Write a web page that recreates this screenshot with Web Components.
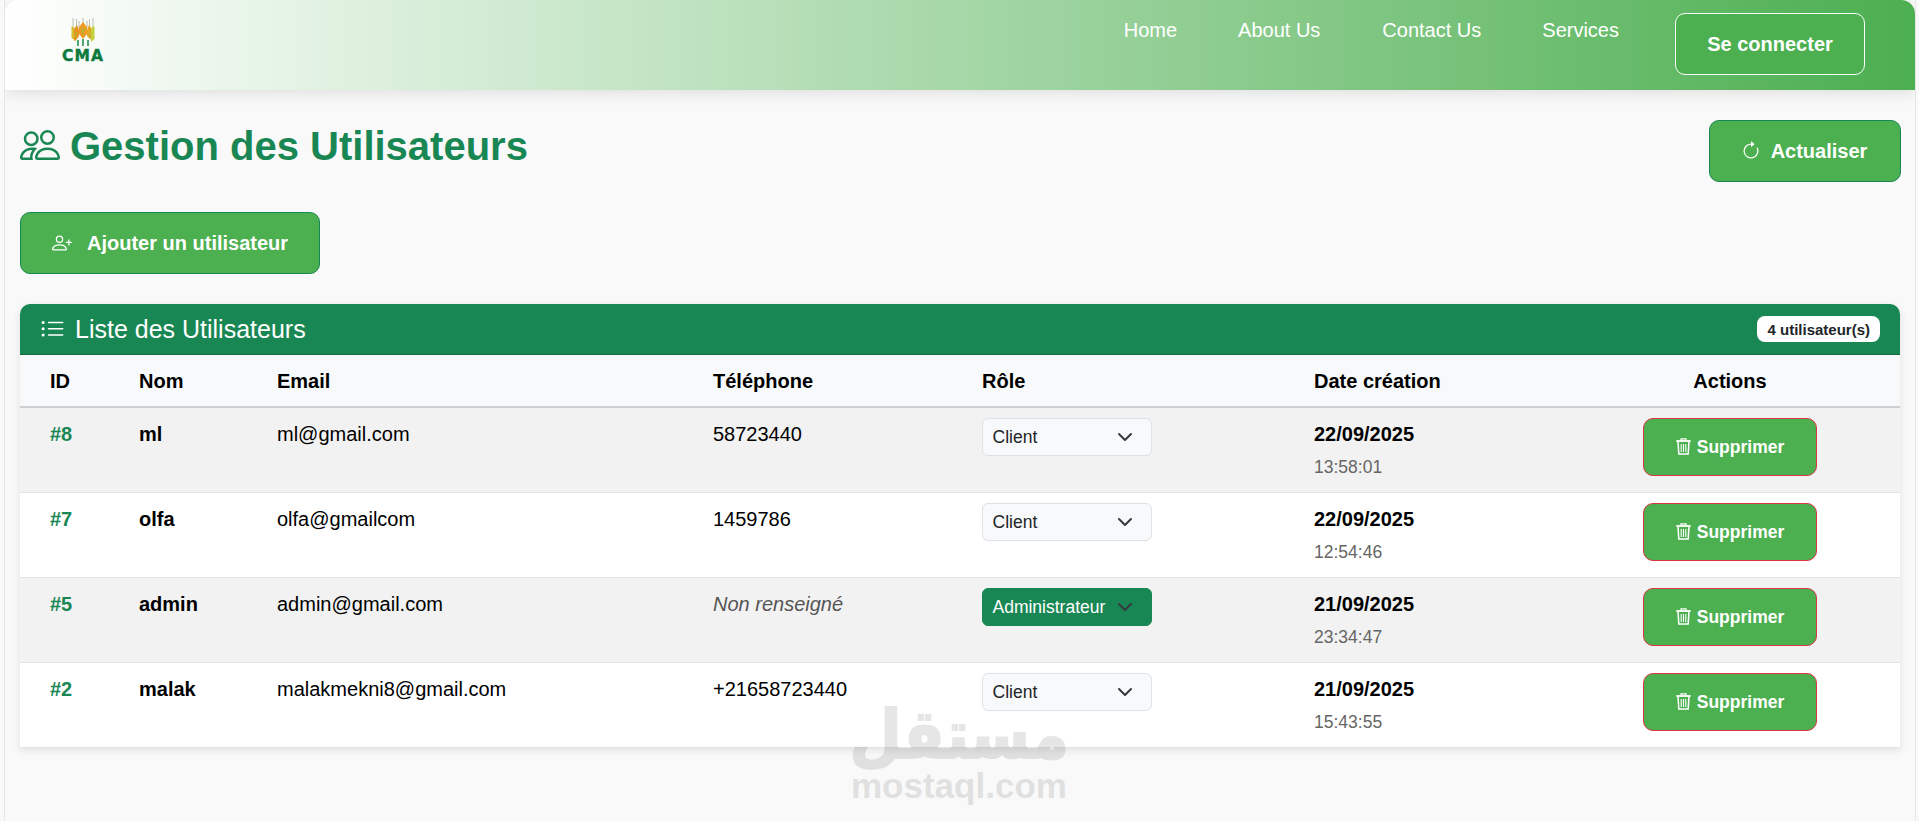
<!DOCTYPE html>
<html lang="fr">
<head>
<meta charset="utf-8">
<title>Gestion des Utilisateurs</title>
<style>
    html, body { margin: 0; height: 821px; overflow: hidden; background: #f9f9f9; }
    body { font-family: "Liberation Sans", Arial, sans-serif; font-size: 20px; color: #000; }
</style>
</head>
<body>
<app-page>
    <top-nav slot="nav"></top-nav>
    <page-head></page-head>
    <app-button icon="person-plus" class="add">Ajouter un utilisateur</app-button>
    <users-card count="4">
        <user-row uid="8" name="ml" email="ml@gmail.com" phone="58723440" role="Client" date="22/09/2025" time="13:58:01"></user-row>
        <user-row uid="7" name="olfa" email="olfa@gmailcom" phone="1459786" role="Client" date="22/09/2025" time="12:54:46"></user-row>
        <user-row uid="5" name="admin" email="admin@gmail.com" role="Administrateur" date="21/09/2025" time="23:34:47"></user-row>
        <user-row uid="2" name="malak" email="malakmekni8@gmail.com" phone="+21658723440" role="Client" date="21/09/2025" time="15:43:55"></user-row>
    </users-card>
</app-page>
<script>
const ICONS = {
    people: '<path d="M15 14s1 0 1-1-1-4-5-4-5 3-5 4 1 1 1 1zm-7.978-1L7 12.996c.001-.264.167-1.03.76-1.72C8.312 10.629 9.282 10 11 10c1.717 0 2.687.63 3.24 1.276.593.69.758 1.457.76 1.72l-.008.002-.014.002H7.022ZM11 7a2 2 0 1 0 0-4 2 2 0 0 0 0 4m3-2a3 3 0 1 1-6 0 3 3 0 0 1 6 0M6.936 9.28a6 6 0 0 0-1.23-.247A7 7 0 0 0 5 9c-4 0-5 3-5 4q0 1 1 1h4.216A2.24 2.24 0 0 1 5 13c0-1.01.377-2.042 1.09-2.904.243-.294.526-.569.846-.816M4.92 10A5.5 5.5 0 0 0 4 13H1c0-.26.164-1.03.76-1.724.545-.636 1.492-1.256 3.16-1.275ZM1.5 5.5a3 3 0 1 1 6 0 3 3 0 0 1-6 0m3-2a2 2 0 1 0 0 4 2 2 0 0 0 0-4"/>',
    "person-plus": '<path d="M6 8a3 3 0 1 0 0-6 3 3 0 0 0 0 6m2-3a2 2 0 1 1-4 0 2 2 0 0 1 4 0m4 8c0 1-1 1-1 1H1s-1 0-1-1 1-4 6-4 6 3 6 4m-1-.004c-.001-.246-.154-.986-.832-1.664C9.516 10.68 8.289 10 6 10s-3.516.68-4.168 1.332c-.678.678-.83 1.418-.832 1.664z"/><path d="M13.5 5a.5.5 0 0 1 .5.5V7h1.5a.5.5 0 0 1 0 1H14v1.5a.5.5 0 0 1-1 0V8h-1.5a.5.5 0 0 1 0-1H13V5.5a.5.5 0 0 1 .5-.5"/>',
    refresh: '<path d="M8 3a5 5 0 1 0 4.546 2.914.5.5 0 0 1 .908-.417A6 6 0 1 1 8 2z"/><path d="M8 4.466V.534a.25.25 0 0 1 .41-.192l2.36 1.966c.12.1.12.284 0 .384L8.41 4.658A.25.25 0 0 1 8 4.466"/>',
    list: '<path d="M5 11.5a.5.5 0 0 1 .5-.5h9a.5.5 0 0 1 0 1h-9a.5.5 0 0 1-.5-.5m0-4a.5.5 0 0 1 .5-.5h9a.5.5 0 0 1 0 1h-9a.5.5 0 0 1-.5-.5m0-4a.5.5 0 0 1 .5-.5h9a.5.5 0 0 1 0 1h-9a.5.5 0 0 1-.5-.5m-3 1a1 1 0 1 0 0-2 1 1 0 0 0 0 2m0 4a1 1 0 1 0 0-2 1 1 0 0 0 0 2m0 4a1 1 0 1 0 0-2 1 1 0 0 0 0 2"/>'
};

function icon(name, size) {
    return `<svg width="${size}" height="${size}" viewBox="0 0 16 16" fill="currentColor" aria-hidden="true">${ICONS[name]}</svg>`;
}

const TRASH = `<svg width="15" height="17" viewBox="0 0 15 17" fill="none" stroke="currentColor" aria-hidden="true">
    <path d="M.3 3h14.4" stroke-width="1.8"/><path d="M5 2.4V.8h5v1.6" stroke-width="1.2"/>
    <path d="M2 3.4l.8 12.6h9.4l.8-12.6" stroke-width="1.5"/><path d="M5.2 6v8M7.5 6v8M9.8 6v8" stroke-width="1.1"/>
</svg>`;

class AppPage extends HTMLElement {
    constructor() {
        super();
        this.attachShadow({ mode: "open" }).innerHTML = `
        <style>
            :host {
                display: block;
                position: relative;
                box-sizing: border-box;
                height: 821px;
                margin: 0 3px 0 4px;
                border-left: 1px solid #e6e6e6;
                border-right: 1px solid #e6e6e6;
                overflow: hidden;
            }
            main { padding: 30px 15px 0; display: flex; flex-direction: column; gap: 30px; align-items: flex-start; }
            .wm {
                position: absolute;
                left: 846px;
                top: 692px;
                width: 213px;
                text-align: center;
                color: #000;
                opacity: 0.095;
                font-weight: 700;
                pointer-events: none;
            }
            .ar {
                font-family: "DejaVu Sans", sans-serif;
                font-size: 60px;
                line-height: 77px;
                height: 77px;
                -webkit-text-stroke: 2px #000;
                transform: translate(5px, 5px) scaleY(1.12);
            }
            .lat { font-size: 35px; line-height: 34px; }
        </style>
        <slot name="nav"></slot>
        <main><slot></slot></main>
        <div class="wm"><div class="ar" dir="rtl">مستقل</div><div class="lat">mostaql.com</div></div>`;
    }
}

class TopNav extends HTMLElement {
    constructor() {
        super();
        this.attachShadow({ mode: "open" }).innerHTML = `
        <style>
            :host {
                display: flex;
                justify-content: space-between;
                height: 90px;
                background: linear-gradient(90deg, #fff 0%, #4caf50 100%);
                border-radius: 14px 14px 0 0;
                box-shadow: 0 4px 14px rgba(0, 0, 0, 0.1);
                position: relative;
                padding-right: 50px;
            }
            .logo { margin-left: 53px; padding-top: 18px; width: 50px; display: flex; flex-direction: column; align-items: center; }
            .logo svg { display: block; }
            .logo b {
                font-family: "DejaVu Sans", sans-serif;
                font-size: 15.5px;
                font-weight: 700;
                letter-spacing: 1px;
                line-height: 14px;
                color: #0c7a3e;
                -webkit-text-stroke: 0.4px #0c7a3e;
                margin-top: 3px;
            }
            ul { list-style: none; margin: 0; padding: 0; display: flex; align-items: flex-start; }
            li { color: #fff; font-size: 20px; line-height: 30px; padding-top: 15px; margin-right: 61px; }
            li:nth-child(2) { margin-right: 62px; }
            li:nth-child(4) { margin-right: 56px; }
            a {
                box-sizing: border-box;
                display: flex;
                align-items: center;
                justify-content: center;
                width: 190px;
                height: 62px;
                margin-top: 13px;
                background: #4caf50;
                border: 1px solid #fff;
                border-radius: 10px;
                color: #fff;
                font-weight: 700;
                font-size: 20px;
            }
        </style>
        <div class="logo">
            <svg width="24" height="28" viewBox="0 0 24 28">
                <path d="M2 0v9M5.5 1v8M8 3v7M12 0v9M16 3v7M18.5 1v8M22 0v9" stroke="#a8b0a0" stroke-width="0.8" fill="none"/>
                <path d="M.5 8l3 2 1.5 4v9l-4.500-3z" fill="#d8bd2e"/>
                <path d="M3 11l3-4 2 5v6l-2 3-3 2z" fill="#e8931f"/>
                <path d="M8 9l4-5 4 5v7l-4 5-4-5z" fill="#ef9a24"/>
                <path d="M16 12l2-5 3 4v11l-2-1-3-3z" fill="#e8a722"/>
                <path d="M20 10l3.500-2v13l-3.500 3z" fill="#c6cf3c"/>
                <path d="M12 9v9M9.500 11l2.500 3 2.500-3M5 14v6M19 14v6" stroke="#a9b832" stroke-width="1" fill="none"/>
                <path d="M7 22v6M12 21v7M17 22v6" stroke="#1f8a45" stroke-width="1.5"/>
            </svg>
            <b>CMA</b>
        </div>
        <ul>
            <li>Home</li><li>About Us</li><li>Contact Us</li><li>Services</li>
            <a>Se connecter</a>
        </ul>`;
    }
}

class AppButton extends HTMLElement {
    constructor() {
        super();
        this.attachShadow({ mode: "open" });
    }

    connectedCallback() {
        const name = this.getAttribute("icon");
        this.shadowRoot.innerHTML = `
        <style>
            :host {
                box-sizing: border-box;
                display: inline-flex;
                align-items: center;
                justify-content: center;
                height: 62px;
                padding: 0 31px;
                background: #4caf50;
                border: 1px solid #198754;
                border-radius: 10px;
                color: #fff;
                font-size: 20px;
                font-weight: 700;
                line-height: 30px;
            }
            svg { margin-right: var(--icon-gap, 15px); flex: none; }
        </style>
        ${icon(name, 20)}<slot></slot>`;
    }
}

class PageHead extends HTMLElement {
    constructor() {
        super();
        this.attachShadow({ mode: "open" }).innerHTML = `
        <style>
            :host { display: flex; justify-content: space-between; align-items: flex-start; width: 1881px; height: 62px; }
            h1 {
                margin: 0;
                padding-top: 1px;
                display: flex;
                color: #198754;
                font-size: 40px;
                font-weight: 700;
                line-height: 50px;
            }
            svg { margin: 4px 10px 0 0; display: block; }
            app-button { --icon-gap: 10px; width: 192px; padding: 0 33px 0 31px; }
        </style>
        <h1>${icon("people", 40)}Gestion des Utilisateurs</h1>
        <app-button icon="refresh">Actualiser</app-button>`;
    }
}

class UsersCard extends HTMLElement {
    constructor() {
        super();
        this.attachShadow({ mode: "open" });
    }

    connectedCallback() {
        this.shadowRoot.innerHTML = `
        <style>
            :host {
                display: block;
                width: 1880px;
                background: #fff;
                border-radius: 10px 10px 0 0;
                box-shadow: 0 2px 8px rgba(0, 0, 0, 0.1);
            }
            header {
                box-sizing: border-box;
                display: flex;
                align-items: center;
                height: 51px;
                padding: 0 20px;
                background: #198754;
                border-bottom: 1px solid #146c43;
                border-radius: 10px 10px 0 0;
                color: #fff;
                font-size: 25px;
            }
            header svg { margin-right: 10px; }
            .badge {
                margin-left: auto;
                padding: 0 10px;
                height: 26px;
                line-height: 27px;
                background: #fff;
                border-radius: 8px;
                color: #212529;
                font-size: 15px;
                font-weight: 700;
            }
            .cols {
                display: grid;
                grid-template-columns: 119px 138px 436px 269px 332px 246px 340px;
                align-items: center;
                height: 53px;
                padding-top: 1px;
                box-sizing: border-box;
                background: #f8f9fa;
                border-bottom: 2px solid #cfcfcf;
                font-weight: 700;
            }
            .cols span:first-child { padding-left: 30px; }
            .cols span:last-child { text-align: center; }
        </style>
        <header>${icon("list", 25)}<span>Liste des Utilisateurs</span><span class="badge">${this.getAttribute("count")} utilisateur(s)</span></header>
        <div class="cols"><span>ID</span><span>Nom</span><span>Email</span><span>Téléphone</span><span>Rôle</span><span>Date création</span><span>Actions</span></div>
        <slot></slot>`;
    }
}

class UserRow extends HTMLElement {
    constructor() {
        super();
        this.attachShadow({ mode: "open" });
    }

    connectedCallback() {
        const a = (n) => this.getAttribute(n);
        const phone = a("phone");
        const admin = a("role") === "Administrateur";
        this.shadowRoot.innerHTML = `
        <style>
            :host {
                box-sizing: border-box;
                display: grid;
                grid-template-columns: 119px 138px 436px 269px 332px 246px 340px;
                height: 85px;
                background: #fff;
                border-bottom: 1px solid #e4e4e4;
                line-height: 30px;
            }
            :host(:nth-child(odd)) { background: #f2f2f2; }
            div { padding-top: 11px; }
            .id { padding-left: 30px; color: #198754; font-weight: 700; }
            .name { font-weight: 700; }
            .none { color: #555; font-style: italic; }
            .role { padding-top: 10px; }
            .select {
                box-sizing: border-box;
                display: flex;
                align-items: center;
                justify-content: space-between;
                padding: 0 18px 0 9.5px;
                width: 170px;
                height: 38px;
                background: #f8f9fa;
                border: 1px solid #dee2e6;
                border-radius: 6px;
                color: #212529;
                font-size: 17.5px;
            }
            .select.admin { background: #198754; border-color: #198754; color: #fff; }
            .select svg { color: #343a40; }
            .date { font-weight: 700; }
            .time { display: block; margin-top: 5px; line-height: 26px; font-size: 17.5px; color: #666; }
            .act { padding-top: 10px; display: flex; justify-content: center; }
            .del {
                box-sizing: border-box;
                display: flex;
                align-items: center;
                justify-content: center;
                width: 174px;
                height: 58px;
                background: #4caf50;
                border: 1px solid #dc3545;
                border-radius: 10px;
                color: #fff;
                font-size: 17.5px;
                font-weight: 700;
            }
            .del svg { margin-right: 6px; margin-top: -2px; }
        </style>
        <div class="id">#${a("uid")}</div>
        <div class="name">${a("name")}</div>
        <div>${a("email")}</div>
        <div>${phone ? phone : '<span class="none">Non renseigné</span>'}</div>
        <div class="role"><span class="select ${admin ? "admin" : ""}"><span>${a("role")}</span>
            <svg width="16" height="16" viewBox="0 0 16 16" fill="none" stroke="currentColor" stroke-width="2" stroke-linecap="round" stroke-linejoin="round"><path d="m2 5 6 6 6-6"/></svg></span></div>
        <div><span class="date">${a("date")}</span><span class="time">${a("time")}</span></div>
        <div class="act"><span class="del">${TRASH}Supprimer</span></div>`;
    }
}

customElements.define("app-page", AppPage);
customElements.define("top-nav", TopNav);
customElements.define("app-button", AppButton);
customElements.define("page-head", PageHead);
customElements.define("users-card", UsersCard);
customElements.define("user-row", UserRow);
</script>
</body>
</html>
